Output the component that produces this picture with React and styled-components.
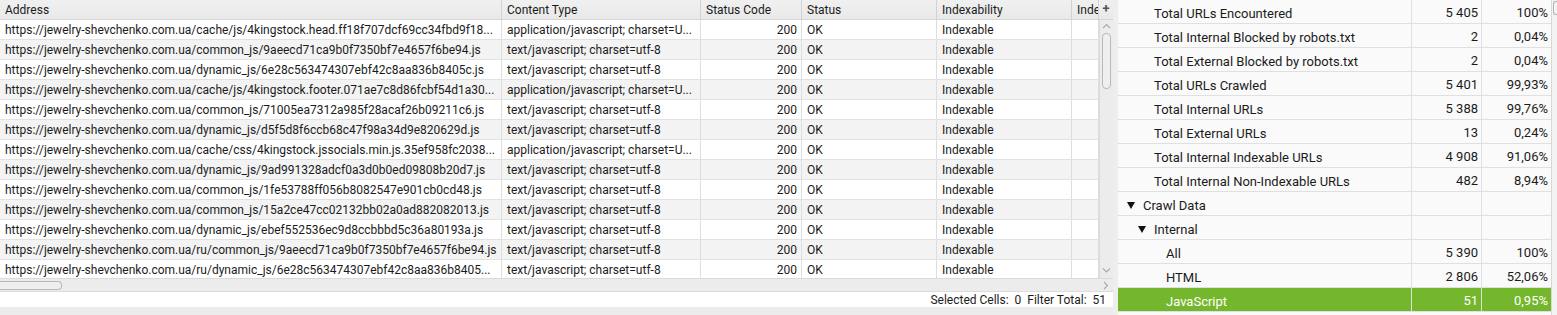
import React from "react";
import styled, { createGlobalStyle } from "styled-components";

const GlobalStyle = createGlobalStyle`
  html, body {
    margin: 0;
    padding: 0;
    background: #ececec;
    font-family: Roboto, "Liberation Sans", sans-serif;
    color: #1b1b1b;
  }
`;

const columns = [
  { title: "Address", width: 502 },
  { title: "Content Type", width: 199 },
  { title: "Status Code", width: 101, right: true },
  { title: "Status", width: 135 },
  { title: "Indexability", width: 135 },
  { title: "Indexability Status", width: 27 },
];

const rows = [
  ["https://jewelry-shevchenko.com.ua/cache/js/4kingstock.head.ff18f707dcf69cc34fbd9f18...", "application/javascript; charset=U..."],
  ["https://jewelry-shevchenko.com.ua/common_js/9aeecd71ca9b0f7350bf7e4657f6be94.js", "text/javascript; charset=utf-8"],
  ["https://jewelry-shevchenko.com.ua/dynamic_js/6e28c563474307ebf42c8aa836b8405c.js", "text/javascript; charset=utf-8"],
  ["https://jewelry-shevchenko.com.ua/cache/js/4kingstock.footer.071ae7c8d86fcbf54d1a30...", "application/javascript; charset=U..."],
  ["https://jewelry-shevchenko.com.ua/common_js/71005ea7312a985f28acaf26b09211c6.js", "text/javascript; charset=utf-8"],
  ["https://jewelry-shevchenko.com.ua/dynamic_js/d5f5d8f6ccb68c47f98a34d9e820629d.js", "text/javascript; charset=utf-8"],
  ["https://jewelry-shevchenko.com.ua/cache/css/4kingstock.jssocials.min.js.35ef958fc2038...", "application/javascript; charset=U..."],
  ["https://jewelry-shevchenko.com.ua/dynamic_js/9ad991328adcf0a3d0b0ed09808b20d7.js", "text/javascript; charset=utf-8"],
  ["https://jewelry-shevchenko.com.ua/common_js/1fe53788ff056b8082547e901cb0cd48.js", "text/javascript; charset=utf-8"],
  ["https://jewelry-shevchenko.com.ua/common_js/15a2ce47cc02132bb02a0ad882082013.js", "text/javascript; charset=utf-8"],
  ["https://jewelry-shevchenko.com.ua/dynamic_js/ebef552536ec9d8ccbbbd5c36a80193a.js", "text/javascript; charset=utf-8"],
  ["https://jewelry-shevchenko.com.ua/ru/common_js/9aeecd71ca9b0f7350bf7e4657f6be94.js", "text/javascript; charset=utf-8"],
  ["https://jewelry-shevchenko.com.ua/ru/dynamic_js/6e28c563474307ebf42c8aa836b8405...", "text/javascript; charset=utf-8"],
];

const overview = [
  { label: "Total URLs Encountered", count: "5 405", pct: "100%", level: 2 },
  { label: "Total Internal Blocked by robots.txt", count: "2", pct: "0,04%", level: 2 },
  { label: "Total External Blocked by robots.txt", count: "2", pct: "0,04%", level: 2 },
  { label: "Total URLs Crawled", count: "5 401", pct: "99,93%", level: 2 },
  { label: "Total Internal URLs", count: "5 388", pct: "99,76%", level: 2 },
  { label: "Total External URLs", count: "13", pct: "0,24%", level: 2 },
  { label: "Total Internal Indexable URLs", count: "4 908", pct: "91,06%", level: 2 },
  { label: "Total Internal Non-Indexable URLs", count: "482", pct: "8,94%", level: 2 },
  { label: "Crawl Data", level: 0, open: true },
  { label: "Internal", level: 1, open: true },
  { label: "All", count: "5 390", pct: "100%", level: 3 },
  { label: "HTML", count: "2 806", pct: "52,06%", level: 3 },
  { label: "JavaScript", count: "51", pct: "0,95%", level: 3, selected: true },
];

const Chevron = ({ dir }) => {
  const d = {
    up: "M1 5 L4.5 1.5 L8 5",
    down: "M1 1.5 L4.5 5 L8 1.5",
    right: "M2 1 L5.5 4.5 L2 8",
  }[dir];
  const size = dir === "right" ? [8, 9] : [9, 7];
  return (
    <svg width={size[0]} height={size[1]} viewBox={`0 0 ${size[0]} ${size[1]}`}>
      <path d={d} fill="none" stroke="#a9a9a9" strokeWidth="1.1" />
    </svg>
  );
};

export default function App() {
  return (
    <>
      <GlobalStyle />
      <Page>
        <LeftPanel>
          <TableArea>
            <Grid>
              <HeaderRow>
                {columns.map((c) => (
                  <HeaderCell key={c.title} w={c.width}>
                    {c.title}
                  </HeaderCell>
                ))}
                <PlusCell>+</PlusCell>
              </HeaderRow>
              <BodyWrap>
                <Body>
                  {rows.map((r, i) => (
                    <Row key={i} odd={i % 2 === 1}>
                      <Cell w={502}>{r[0]}</Cell>
                      <Cell w={199}>{r[1]}</Cell>
                      <Cell w={101} right>
                        200
                      </Cell>
                      <Cell w={135}>OK</Cell>
                      <Cell w={135}>Indexable</Cell>
                      <Cell w={27} />
                    </Row>
                  ))}
                </Body>
                <VScroll>
                  <Chevron dir="up" />
                  <VThumb />
                  <VSpacer />
                  <Chevron dir="down" />
                </VScroll>
              </BodyWrap>
            </Grid>
          </TableArea>
          <HScroll>
            <HThumb />
            <HSpacer />
            <Chevron dir="right" />
          </HScroll>
          <StatusBar>
            <span>Selected Cells:&nbsp; 0&nbsp; Filter Total:&nbsp; 51</span>
          </StatusBar>
          <BottomStrip />
        </LeftPanel>
        <Splitter />
        <RightPanel>
          <Overview>
            {overview.map((o) => (
              <ORow key={o.label} selected={o.selected}>
                <OLabel level={o.level}>
                  {o.open && <Triangle />}
                  {o.label}
                </OLabel>
                <ONum w={70}>{o.count}</ONum>
                <ONum w={69} last>
                  {o.pct}
                </ONum>
              </ORow>
            ))}
          </Overview>
          <RScroll>
            <RThumb />
          </RScroll>
        </RightPanel>
      </Page>
    </>
  );
}

const Page = styled.div`
  display: flex;
  width: 1557px;
  height: 315px;
  overflow: hidden;
`;

const LeftPanel = styled.div`
  width: 1113px;
  display: flex;
  flex-direction: column;
  background: #ececec;
`;

const TableArea = styled.div`
  height: 278px;
  overflow: hidden;
  background: #fff;
`;

const Grid = styled.div`
  display: flex;
  flex-direction: column;
  height: 100%;
`;

const HeaderRow = styled.div`
  display: flex;
  height: 20px;
  background: linear-gradient(#f0f0f0, #e9e9e9);
  border-bottom: 1px solid #d6d6d6;
  box-sizing: border-box;
`;

const HeaderCell = styled.div`
  width: ${(p) => p.w}px;
  flex: none;
  box-sizing: border-box;
  padding: 2px 0 0 5px;
  font-size: 12px;
  line-height: 17px;
  white-space: nowrap;
  overflow: hidden;
  border-right: 1px solid #d2d2d2;
`;

const PlusCell = styled.div`
  width: 14px;
  flex: none;
  font-size: 13px;
  font-weight: bold;
  color: #555;
  line-height: 18px;
  text-align: center;
`;

const BodyWrap = styled.div`
  display: flex;
  flex: 1;
  min-height: 0;
`;

const Body = styled.div`
  width: 1099px;
  overflow: hidden;
`;

const Row = styled.div`
  display: flex;
  height: 20px;
  box-sizing: border-box;
  border-bottom: 1px solid #e2e2e2;
  background: ${(p) => (p.odd ? "#f3f3f3" : "#ffffff")};
`;

const Cell = styled.div`
  width: ${(p) => p.w}px;
  flex: none;
  box-sizing: border-box;
  padding: 2px 4px 0 5px;
  font-size: 12px;
  line-height: 17px;
  white-space: nowrap;
  overflow: hidden;
  text-align: ${(p) => (p.right ? "right" : "left")};
  border-right: 1px solid #dedede;
`;

const VScroll = styled.div`
  width: 14px;
  flex: none;
  display: flex;
  flex-direction: column;
  align-items: center;
  background: #ececec;
  border-left: 1px solid #dadada;
  box-sizing: border-box;
  padding: 3px 0 4px;
`;

const VThumb = styled.div`
  width: 9px;
  height: 56px;
  margin-top: 3px;
  border: 1px solid #b9b9b9;
  border-radius: 4px;
  background: #efefef;
  box-sizing: border-box;
`;

const VSpacer = styled.div`
  flex: 1;
`;

const HScroll = styled.div`
  height: 13px;
  display: flex;
  align-items: center;
  background: #ececec;
  border-top: 1px solid #dadada;
  box-sizing: border-box;
  padding-right: 3px;
`;

const HThumb = styled.div`
  width: 62px;
  height: 9px;
  border: 1px solid #b9b9b9;
  border-left: none;
  border-radius: 0 4px 4px 0;
  background: #efefef;
  box-sizing: border-box;
`;

const HSpacer = styled.div`
  flex: 1;
`;

const StatusBar = styled.div`
  height: 16px;
  background: #fff;
  display: flex;
  justify-content: flex-end;
  align-items: center;
  padding-right: 7px;
  font-size: 12px;
  border-top: 1px solid #dcdcdc;
  box-sizing: border-box;
`;

const BottomStrip = styled.div`
  flex: 1;
  background: #ececec;
`;

const Splitter = styled.div`
  width: 5px;
  flex: none;
  background: #eeeeee;
`;

const RightPanel = styled.div`
  flex: 1;
  display: flex;
  background: #fafafa;
`;

const Overview = styled.div`
  width: 433px;
  flex: none;
  border-right: 1px solid #d8d8d8;
`;

const ORow = styled.div`
  display: flex;
  height: 24px;
  box-sizing: border-box;
  border-bottom: 1px solid #e0e0e0;
  background: ${(p) => (p.selected ? "#74b72c" : "#fafafa")};
  color: ${(p) => (p.selected ? "#ffffff" : "#1b1b1b")};
`;

const OLabel = styled.div`
  flex: 1;
  display: flex;
  align-items: center;
  padding: 3px 0 0 ${(p) => [9, 20, 36, 48][p.level]}px;
  font-size: 13px;
  white-space: nowrap;
  border-right: 1px solid #e0e0e0;
`;

const ONum = styled.div`
  width: ${(p) => p.w}px;
  flex: none;
  box-sizing: border-box;
  padding: 3px 3px 0 0;
  font-size: 13px;
  line-height: 20px;
  text-align: right;
  border-right: ${(p) => (p.last ? "none" : "1px solid #e0e0e0")};
`;

const Triangle = styled.span`
  width: 0;
  height: 0;
  border-left: 4px solid transparent;
  border-right: 4px solid transparent;
  border-top: 7px solid #111;
  margin-right: 8px;
`;

const RScroll = styled.div`
  flex: 1;
  background: #f3f3f3;
  padding-top: 1px;
`;

const RThumb = styled.div`
  width: 6px;
  height: 14px;
  margin-left: 1px;
  border: 1px solid #b5b5b5;
  border-right: none;
  border-radius: 3px 0 0 3px;
  box-sizing: border-box;
`;
